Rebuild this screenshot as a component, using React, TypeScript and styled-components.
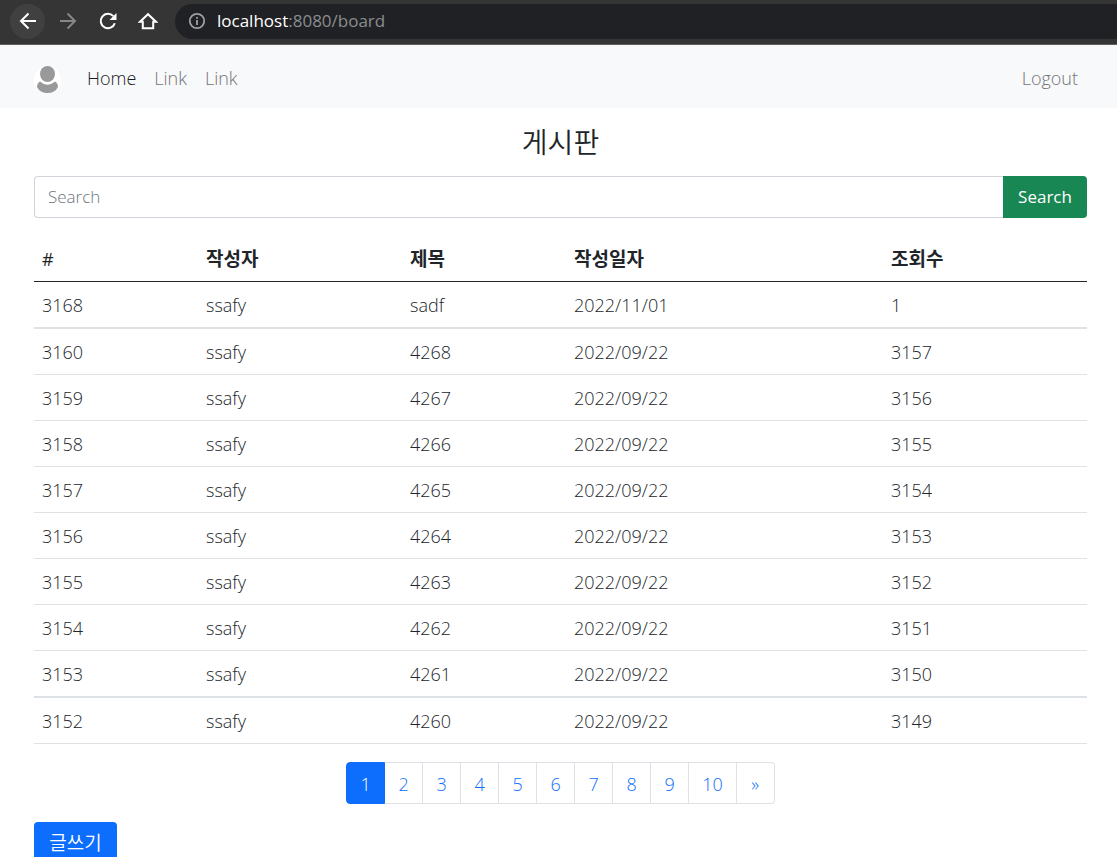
import React from "react";
import styled, { createGlobalStyle } from "styled-components";

const GlobalStyle = createGlobalStyle`
  *, *::before, *::after { box-sizing: border-box; }
  body {
    margin: 0;
    background: #fff;
    color: #212529;
    font-family: "Open Sans", "Noto Sans CJK KR", sans-serif;
    font-size: 17px;
    font-weight: 350;
    line-height: 26px;
  }
  button, input { font: inherit; }
`;

const BrowserFrame = styled.div`
  display: flex;
  flex-direction: column;
  height: 100vh;
`;

const Toolbar = styled.div`
  display: flex;
  align-items: center;
  gap: 5px;
  flex: none;
  height: 45px;
  padding: 0 0 2px 10px;
  background: #353535;
  border-bottom: 1px solid #5f5b5b;
`;

const ToolButton = styled.button<{ $raised?: boolean; $dim?: boolean }>`
  display: flex;
  align-items: center;
  justify-content: center;
  width: 35px;
  height: 35px;
  padding: 0;
  border: 0;
  border-radius: 50%;
  background: ${(p) => (p.$raised ? "#404040" : "transparent")};
  color: ${(p) => (p.$dim ? "#868686" : "#fff")};
`;

const AddressBar = styled.label`
  display: flex;
  align-items: center;
  flex: 1;
  gap: 11px;
  height: 35px;
  margin-left: 5px;
  padding-left: 13px;
  border-radius: 18px 0 0 18px;
  background: #202124;
  color: #9aa0a6;
`;

const Address = styled.span`
  color: #8b8d90;
  font-weight: 400;
`;

const Host = styled.span`
  color: #fff;
`;

const Viewport = styled.div`
  flex: 1;
  min-height: 0;
  overflow: auto;
  scrollbar-width: none;
`;

const Navbar = styled.nav`
  display: flex;
  align-items: center;
  gap: 18px;
  height: 63px;
  padding: 2px 39px 0 34px;
  background: #f8f9fb;
`;

const Brand = styled.a`
  display: flex;
  margin-right: 8px;
  padding-top: 4px;
`;

const NavLink = styled.a<{ $active?: boolean; $end?: boolean }>`
  margin-left: ${(p) => (p.$end ? "auto" : "0")};
  color: ${(p) => (p.$active ? "#1a1a1a" : "#737475")};
  font-size: 18px;
  text-decoration: none;
`;

const Main = styled.main`
  display: flex;
  flex-direction: column;
  gap: 18px;
  padding: 18px 30px 18px 34px;
`;

const Title = styled.h1`
  margin: 0;
  font-size: 28px;
  font-weight: 350;
  line-height: 32px;
  text-align: center;
`;

const SearchForm = styled.form`
  display: flex;
  height: 42px;
`;

const SearchInput = styled.input`
  flex: 1;
  min-width: 0;
  padding: 0 13px;
  border: 1px solid #ced4da;
  border-right: 0;
  border-radius: 4px 0 0 4px;
  background: #fff;
  &::placeholder { color: #6c757d; opacity: 1; }
`;

const SearchButton = styled.button`
  width: 84px;
  padding: 0;
  border: 0;
  border-radius: 0 4px 4px 0;
  background: #198754;
  color: #fff;
  font-weight: 400;
`;

const Table = styled.table`
  width: 100%;
  table-layout: fixed;
  border-collapse: separate;
  border-spacing: 0;
`;

const Column = styled.col<{ $width: number }>`
  width: ${(p) => p.$width}px;
`;

const HeadCell = styled.th<{ $light: boolean }>`
  height: 46px;
  padding: 0 8px;
  border-bottom: 1px solid #212529;
  font-size: ${(p) => (p.$light ? 18 : 19)}px;
  font-weight: ${(p) => (p.$light ? 400 : 700)};
  text-align: left;
`;

const Cell = styled.td<{ $thick: boolean }>`
  height: ${(p) => (p.$thick ? 47 : 46)}px;
  padding: 0 8px;
  border-bottom: ${(p) => (p.$thick ? 2 : 1)}px solid #dee2e6;
  font-size: 18px;
`;

const Pages = styled.ul`
  display: flex;
  justify-content: center;
  margin: 0;
  padding: 0;
  list-style: none;
`;

const PageLink = styled.a<{ $active?: boolean }>`
  display: flex;
  align-items: center;
  justify-content: center;
  min-width: 38px;
  height: 42px;
  padding: 2px 13px 0;
  border: 1px solid ${(p) => (p.$active ? "#0d6efd" : "#dee2e6")};
  border-left-width: ${(p) => (p.$active ? 1 : 0)}px;
  background: ${(p) => (p.$active ? "#0d6efd" : "#fff")};
  color: ${(p) => (p.$active ? "#fff" : "#0d6efd")};
  font-size: 18px;
  text-decoration: none;
  li:first-child > & { border-radius: 4px 0 0 4px; min-width: 39px; }
  li:last-child > & { border-radius: 0 4px 4px 0; }
`;

const WriteButton = styled.button`
  align-self: flex-start;
  min-width: 83px;
  height: 42px;
  padding: 0 15px;
  border: 0;
  border-radius: 4px;
  background: #0d6efd;
  color: #fff;
  font-size: 19px;
`;

const columns = [
  { label: "#", width: 164 },
  { label: "작성자", width: 204 },
  { label: "제목", width: 164 },
  { label: "작성일자", width: 317 },
  { label: "조회수", width: 204 },
];

const posts = [
  ["3168", "ssafy", "sadf", "2022/11/01", "1"],
  ["3160", "ssafy", "4268", "2022/09/22", "3157"],
  ["3159", "ssafy", "4267", "2022/09/22", "3156"],
  ["3158", "ssafy", "4266", "2022/09/22", "3155"],
  ["3157", "ssafy", "4265", "2022/09/22", "3154"],
  ["3156", "ssafy", "4264", "2022/09/22", "3153"],
  ["3155", "ssafy", "4263", "2022/09/22", "3152"],
  ["3154", "ssafy", "4262", "2022/09/22", "3151"],
  ["3153", "ssafy", "4261", "2022/09/22", "3150"],
  ["3152", "ssafy", "4260", "2022/09/22", "3149"],
];

const thickRows = [0, 8];
const pages = ["1", "2", "3", "4", "5", "6", "7", "8", "9", "10", "»"];

const iconProps = {
  width: 20,
  height: 20,
  viewBox: "0 0 20 20",
  fill: "none",
  stroke: "currentColor",
  strokeWidth: 2,
  "aria-hidden": true,
} as const;

export default function App() {
  return (
    <>
      <GlobalStyle />
      <BrowserFrame>
        <Toolbar>
          <ToolButton type="button" aria-label="Back" $raised>
            <svg {...iconProps}><path d="M18 10H3.500M10.500 2.500L3 10l7.500 7.500" /></svg>
          </ToolButton>
          <ToolButton type="button" aria-label="Forward" $dim>
            <svg {...iconProps}><path d="M2 10h14.500M9.500 2.500L17 10l-7.500 7.500" /></svg>
          </ToolButton>
          <ToolButton type="button" aria-label="Reload">
            <svg {...iconProps}>
              <path d="M16.800 12.200A7.200 7.200 0 1 1 15.300 5.200" />
              <path d="M18.500 2v7h-7z" fill="currentColor" stroke="none" />
            </svg>
          </ToolButton>
          <ToolButton type="button" aria-label="Home">
            <svg {...iconProps}><path d="M2 10.700h2.800v6.500h10.400v-6.500H18L10 3.200z" /></svg>
          </ToolButton>
          <AddressBar>
            <svg {...iconProps} width={18} height={18}>
              <circle cx="10" cy="10" r="8" />
              <path d="M10 9v5.500M10 5.500v2" />
            </svg>
            <Address><Host>localhost</Host>:8080/board</Address>
          </AddressBar>
        </Toolbar>
        <Viewport>
          <Navbar>
            <Brand href="#" aria-label="Profile">
              <svg width="27" height="27" viewBox="0 0 27 27" aria-hidden="true">
                <circle cx="13.500" cy="13.500" r="13.500" fill="#fff" />
                <ellipse cx="13.500" cy="8" rx="7.500" ry="8" fill="#999" />
                <path d="M6 15.500Q13.500 22 21 15.500Q24 17 24 21Q21 27 13.500 27T3 21Q3 17 6 15.500z" fill="#999" />
              </svg>
            </Brand>
            <NavLink href="#" $active>Home</NavLink>
            <NavLink href="#">Link</NavLink>
            <NavLink href="#">Link</NavLink>
            <NavLink href="#" $end>Logout</NavLink>
          </Navbar>
          <Main>
            <Title>게시판</Title>
            <SearchForm onSubmit={(e) => e.preventDefault()}>
              <SearchInput type="text" placeholder="Search" aria-label="Search" />
              <SearchButton type="submit">Search</SearchButton>
            </SearchForm>
            <Table>
              <colgroup>
                {columns.map((c) => <Column key={c.label} $width={c.width} />)}
              </colgroup>
              <thead>
                <tr>
                  {columns.map((c) => (
                    <HeadCell key={c.label} scope="col" $light={c.label === "#"}>{c.label}</HeadCell>
                  ))}
                </tr>
              </thead>
              <tbody>
                {posts.map((post, row) => (
                  <tr key={post[0]}>
                    {post.map((value, i) => (
                      <Cell key={i} $thick={thickRows.includes(row)}>{value}</Cell>
                    ))}
                  </tr>
                ))}
              </tbody>
            </Table>
            <nav aria-label="Pages">
              <Pages>
                {pages.map((page, i) => (
                  <li key={page}><PageLink href="#" $active={i === 0}>{page}</PageLink></li>
                ))}
              </Pages>
            </nav>
            <WriteButton type="button">글쓰기</WriteButton>
          </Main>
        </Viewport>
      </BrowserFrame>
    </>
  );
}
